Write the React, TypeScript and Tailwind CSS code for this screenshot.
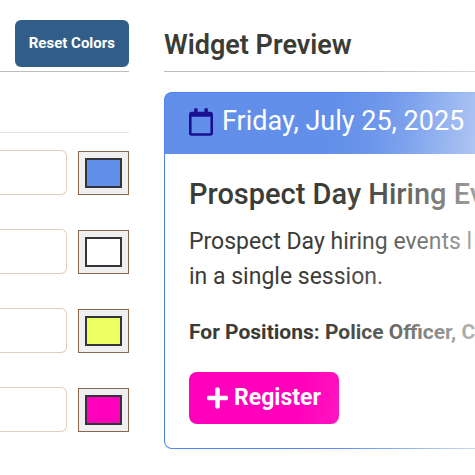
import React, { useState } from 'react';
import { FaPlus, FaRegCalendar } from 'react-icons/fa';

interface ColorField {
  id: string;
  label: string;
  color: string;
}

const DEFAULT_FIELDS: ColorField[] = [
  { id: 'primary', label: 'Header background', color: '#628fe9' },
  { id: 'header-text', label: 'Header text', color: '#ffffff' },
  { id: 'accent', label: 'Accent', color: '#eeff62' },
  { id: 'button', label: 'Button', color: '#ff00bb' },
];

const ColorRow: React.FC<{ field: ColorField; onChange: (color: string) => void }> = ({ field, onChange }) => (
  <div className="flex items-end gap-[11px]">
    <input
      type="text"
      id={`${field.id}-name`}
      aria-label={field.label}
      className="h-[45px] min-w-0 flex-1 rounded-r-md border border-l-0 border-[#dccfbf] bg-white px-3 outline-none"
    />
    <input
      type="color"
      id={`${field.id}-color`}
      aria-label={`${field.label} color`}
      value={field.color}
      onChange={(e) => onChange(e.target.value)}
      className="h-11 w-[51px] shrink-0 border border-[#8a674a] bg-[#efefef] p-1.5 [&::-webkit-color-swatch]:border-2 [&::-webkit-color-swatch]:border-[#33333b] [&::-webkit-color-swatch-wrapper]:p-0"
    />
  </div>
);

export default function App() {
  const [fields, setFields] = useState(DEFAULT_FIELDS);

  const updateColor = (id: string, color: string) => {
    setFields(fields.map((f) => (f.id === id ? { ...f, color } : f)));
  };

  return (
    <main className="grid min-h-screen grid-cols-[129px_minmax(0,1fr)] gap-[35px] overflow-hidden bg-white font-['Roboto',sans-serif] text-[#3b3c36]">
      <section className="pt-5">
        <div className="flex justify-end border-b border-[#bdbdbd] pb-1">
          <button
            onClick={() => setFields(DEFAULT_FIELDS)}
            className="h-[47px] rounded-md bg-[#315e88] px-3.5 text-[15px] font-bold whitespace-nowrap text-white"
          >
            Reset Colors
          </button>
        </div>
        <div className="mt-[60px] border-t border-[#e5e5e5]" />
        <div className="mt-[17px] flex flex-col gap-[34px]">
          {fields.map((field) => (
            <ColorRow key={field.id} field={field} onChange={(color) => updateColor(field.id, color)} />
          ))}
        </div>
      </section>

      <section className="relative overflow-hidden pt-5">
        <h2 className="border-b border-[#bdbdbd] pt-2 pb-[9px] text-[27px] leading-[34px] font-semibold whitespace-nowrap">
          Widget Preview
        </h2>

        <article className="mt-5 rounded-l-lg border border-r-0 border-[#4f86ec] bg-[#628fe9] whitespace-nowrap">
          <header className="flex h-[61px] items-center gap-[9px] pb-1 pl-6 text-[27px] text-white">
            <FaRegCalendar className="h-7 w-6 shrink-0 text-[#1b1091]" />
            <span>Friday, July 25, 2025</span>
          </header>
          <div className="rounded-bl-[7px] bg-white pt-5 pb-6 pl-6">
            <h3 className="text-[29px] leading-10 font-medium">Prospect Day Hiring Ev</h3>
            <p className="mt-2.5 text-[23px] leading-[35px]">
              Prospect Day hiring events l<br />
              in a single session.
            </p>
            <p className="mt-[21px] text-[21px] leading-[35px] font-bold">For Positions: Police Officer, C</p>
            <button className="mt-[22px] flex h-[52px] items-center gap-1.5 rounded-lg bg-[#ff00bb] px-[18px] text-[23px] font-bold text-white">
              <FaPlus className="h-6 w-[21px]" />
              Register
            </button>
          </div>
        </article>

        <div className="pointer-events-none absolute inset-0 bg-[linear-gradient(98deg,rgba(255,255,255,0)_185px,rgba(255,255,255,0.07)_226px,rgba(255,255,255,0.18)_260px,rgba(255,255,255,0.45)_322px,rgba(255,255,255,0.6)_350px,rgba(255,255,255,1)_450px)]" />
      </section>
    </main>
  );
}
